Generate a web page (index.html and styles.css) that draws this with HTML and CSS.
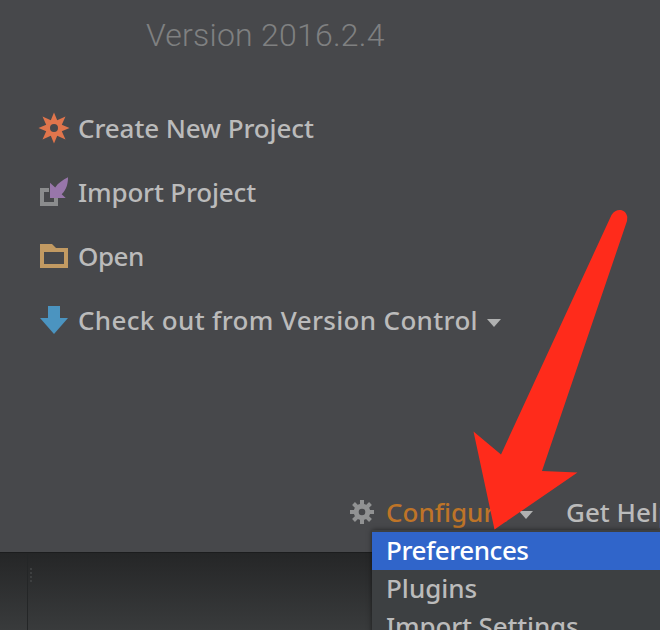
FILE: index.html
```
<!DOCTYPE html>
<html lang="en">
<head>
<meta charset="utf-8">
<title>Welcome</title>
<link rel="stylesheet" href="styles.css">
</head>
<body>
<main class="screen">
  <section class="welcome">
    <p class="version">Version 2016.2.4</p>
    <nav class="actions">
      <a class="action">
        <svg class="icon" viewBox="0 0 32 32"><path fill="#e0754c" fill-rule="evenodd" d="M16 .5L19.200 8.200L27.500 4.500L23.800 12.800L31.500 16L23.800 19.200L27.500 27.500L19.200 23.800L16 31.500L12.800 23.800L4.500 27.500L8.200 19.200L.5 16L8.200 12.800L4.500 4.500L12.800 8.200zM16 12a4 4 0 1 0 0 8a4 4 0 1 0 0-8z"/></svg>
        <span class="label create">Create New Project</span>
      </a>
      <a class="action">
        <svg class="icon" viewBox="0 0 32 32"><path fill="#8b8c8d" d="M2 12h9v4H6v10h10v-5h4v9H2z"/><path fill="#9876aa" d="M12 6.700L17.200 11.500C20 7 25 4 30 1.300C30 8 28.500 13.500 23.700 18.300L27.700 22H12z"/></svg>
        <span class="label import">Import Project</span>
      </a>
      <a class="action">
        <svg class="icon" viewBox="0 0 32 32"><path fill="#c29a62" fill-rule="evenodd" d="M2 4h12l4 4h12v20H2zM6 12v12h20V12z"/></svg>
        <span class="label open">Open</span>
      </a>
      <a class="action">
        <svg class="icon" viewBox="0 0 32 32"><path fill="#4b94c0" d="M10 2h12v12h8L16 30 2 14h8z"/></svg>
        <span class="label checkout">Check out from Version Control</span>
        <svg class="caret" viewBox="0 0 14 8"><path d="M0 0h14L7 8z"/></svg>
      </a>
    </nav>
    <footer class="footer">
      <svg class="gear" viewBox="-12 -12 24 24">
        <g fill="#919293"><path id="tooth" d="M-2-12h4v6h-4z"/><use href="#tooth" transform="rotate(45)"/><use href="#tooth" transform="rotate(90)"/><use href="#tooth" transform="rotate(135)"/><use href="#tooth" transform="rotate(180)"/><use href="#tooth" transform="rotate(225)"/><use href="#tooth" transform="rotate(270)"/><use href="#tooth" transform="rotate(315)"/></g>
        <circle r="5.800" fill="none" stroke="#919293" stroke-width="5"/>
      </svg>
      <span class="label configure">Configure</span>
      <svg class="caret" viewBox="0 0 14 8"><path d="M0 0h14L7 8z"/></svg>
      <span class="label help">Get Help</span>
    </footer>
  </section>
  <div class="editor"><i class="mark"></i></div>
  <ul class="menu">
    <li class="item selected"><span class="label prefs">Preferences</span></li>
    <li class="item"><span class="label plugins">Plugins</span></li>
    <li class="item"><span class="label settings">Import Settings</span></li>
  </ul>
  <svg class="pointer" viewBox="0 0 660 630"><path fill="#ff2b1b" d="M611.500 215C616 207.500 626 208.500 627.300 217L627 221L542 471L577.500 472.500L494.500 529.500L473.500 431.500L501 454.500z"/></svg>
</main>
</body>
</html>
```

FILE: styles.css
```
* { box-sizing: border-box; }
body { margin: 0; background: #47484b; }
.screen {
  position: relative;
  width: 660px;
  height: 630px;
  overflow: hidden;
  font: 500 26px/38px "Noto Sans", sans-serif;
  color: #bbb;
}
.welcome { height: 552px; background: #47484b; }
.version {
  margin: 0;
  padding: 16px 0 0 146px;
  height: 96px;
  font: 300 32px/38px Roboto, sans-serif;
  letter-spacing: 0.23px;
  color: #7f8081;
}
.actions { display: flex; flex-direction: column; height: 397px; }
.action { display: flex; align-items: center; height: 64px; padding-left: 38px; }
.icon { width: 32px; height: 32px; margin-right: 8px; flex: none; }
.label { white-space: nowrap; flex: none; }
.create { letter-spacing: -0.1px; }
.import { letter-spacing: -0.18px; }
.open { letter-spacing: -0.5px; }
.checkout { letter-spacing: 0.34px; }
.caret { width: 14px; height: 8px; margin: 5px 0 0 9px; fill: #b0b1b1; flex: none; }
.footer { display: flex; align-items: center; height: 38px; padding-left: 350px; }
.gear { width: 24px; height: 24px; margin-right: 12px; flex: none; }
.configure { width: 124px; color: #be7428; }
.help { margin-left: 33px; }
.editor {
  height: 78px;
  padding: 15px 0 0 27px;
  border-top: 1px solid #1c1d1e;
  background: linear-gradient(90deg, transparent 27px, #242627 27px, #242627 28px, transparent 28px), linear-gradient(#252627, #393b3c);
}
.mark { display: block; width: 5px; height: 14px; border-right: 2px dotted #3d3f40; }
.menu {
  position: absolute;
  left: 372px;
  top: 530px;
  width: 288px;
  margin: 0;
  padding: 2px 0 0;
  list-style: none;
  background: #3d4042;
  box-shadow: 0 0 5px #0008;
}
.item { height: 38px; padding-left: 14px; line-height: 36px; }
.selected { background: #3065ca; color: #fff; }
.prefs { letter-spacing: -0.45px; }
.settings { letter-spacing: -0.15px; }
.pointer { position: absolute; inset: 0; width: 660px; height: 630px; }
```
